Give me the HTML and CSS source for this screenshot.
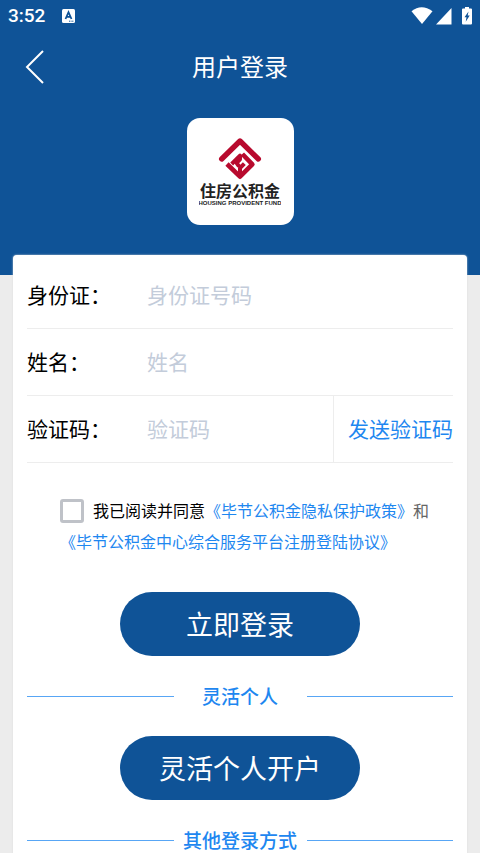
FILE: index.html
```html
<!DOCTYPE html>
<html lang="zh-CN">
<head>
<meta charset="utf-8">
<meta name="viewport" content="width=device-width, initial-scale=1">
<title>用户登录</title>
<link rel="stylesheet" href="styles.css">
</head>
<body>
<header class="hero">
  <div class="status">
    <span class="clock">3:52</span>
    <svg class="app-badge" viewBox="0 0 13 14" aria-hidden="true"><rect width="13" height="14" rx="1.5" fill="#fff"/><path d="M3.5 10 6.5 3.2 9.5 10M4.6 7.9h3.8" fill="none" stroke="#0f5397" stroke-width="1.8"/><path d="M7 12.2h5" stroke="#0f5397" stroke-width="1" stroke-dasharray="1 .6"/></svg>
    <svg class="signals" viewBox="0 0 62 20" aria-hidden="true"><g fill="#fff"><path d="M.5 5.2Q10.500-2.500 21.500 5.200L11 18Z"/><path d="M40.500 2v16.500h-15.500Z"/><path d="M54 1h4v1.500h2q1 0 1 1v14q0 1-1 1h-8q-1 0-1-1v-14q0-1 1-1h2Z"/></g><path d="M57.500 5.500 53.500 11.200h2l-.8 4.500 4-6.200h-2Z" fill="#0f5397"/></svg>
  </div>
  <nav class="bar">
    <button class="back" type="button" aria-label="返回"><svg viewBox="0 0 20 34" aria-hidden="true"><path d="M18 1 2 17l16 16" fill="none" stroke="#fff" stroke-width="2"/></svg></button>
    <h1 class="title">用户登录</h1>
  </nav>
  <div class="logo">
    <svg class="mark" viewBox="0 0 150 144" aria-hidden="true"><g fill="none" stroke="#b80a2e" stroke-linejoin="round"><path d="M20 75 75 21 130 75" stroke-width="16" stroke-linecap="round"/><path d="M36 90 75 128 112 91 82 60" stroke-width="14"/><path d="M50 90 75 65V76L65 87 72 97M75 120V102L88 89" stroke-width="12"/></g></svg>
    <span class="logo-name">住房公积金</span>
    <svg class="logo-sub" viewBox="0 0 82 7" role="img" aria-label="HOUSING PROVIDENT FUND"><text x="41" y="6" text-anchor="middle">HOUSING PROVIDENT FUND</text></svg>
  </div>
</header>
<main class="card">
  <form class="form">
    <div class="row"><label for="idno">身份证：</label><input id="idno" type="text" placeholder="身份证号码"></div>
    <div class="row"><label for="name">姓名：</label><input id="name" type="text" placeholder="姓名"></div>
    <div class="row"><label for="code">验证码：</label><input id="code" type="text" placeholder="验证码"><button class="send" type="button">发送验证码</button></div>
    <div class="agree">
      <input id="agree" type="checkbox"><label for="agree">我已阅读并同意</label><a href="#privacy">《毕节公积金隐私保护政策》</a><span>和</span>
      <a class="terms" href="#terms">《毕节公积金中心综合服务平台注册登陆协议》</a>
    </div>
    <button class="pill" type="submit">立即登录</button>
    <h2 class="divider">灵活个人</h2>
    <button class="pill" type="button">灵活个人开户</button>
    <h2 class="divider">其他登录方式</h2>
  </form>
</main>
</body>
</html>
```
FILE: styles.css
```css
* { box-sizing: border-box; }
body {
  margin: 0;
  background: #ececec;
  color: #000;
  font-family: "Noto Sans CJK SC", sans-serif;
}
button, input { font: inherit; border: 0; background: none; padding: 0; }
a { color: #1e87f0; text-decoration: none; }

.hero { height: 275px; background: #0f5397; color: #fff; }
.status { display: flex; align-items: center; height: 32px; padding: 0 7px 0 8px; }
.clock { font: 500 19px/32px Roboto, sans-serif; }
.app-badge { width: 13px; height: 14px; margin-left: 17px; }
.signals { width: 62px; height: 20px; margin-left: auto; }
.bar { display: grid; grid-template-columns: 72px 1fr 72px; align-items: center; height: 70px; }
.back { display: flex; justify-content: flex-end; padding-right: 27px; }
.back svg { width: 20px; height: 34px; }
.title { margin: 0; padding-bottom: 2px; text-align: center; font-size: 24px; line-height: 32px; font-weight: 400; }
.logo {
  display: flex;
  flex-direction: column;
  align-items: center;
  width: 107px;
  height: 107px;
  margin: 16px auto 0;
  padding-top: 16px;
  border-radius: 13px;
  background: #fff;
  color: #222;
}
.mark { width: 50px; height: 48px; }
.logo-name { font-size: 16px; line-height: 16px; font-weight: 700; }
.logo-sub { width: 82px; height: 7px; margin-top: 1px; }
.logo-sub text { font: 700 6px "Liberation Sans", sans-serif; fill: #222; }

.card {
  position: relative;
  margin: -20px 13px 0;
  padding: 7px 14px 0;
  border-radius: 4px 4px 0 0;
  background: #fff;
  box-shadow: 0 0 2px #d8d8d8;
}
.row { display: flex; height: 67px; border-bottom: 1px solid #ededed; font-size: 21px; }
.row label { width: 120px; line-height: 64px; }
.row input { flex: 1; min-width: 0; padding-bottom: 2px; outline: 0; }
.row input::placeholder { color: #c3ccda; opacity: 1; }
.send { padding: 0 0 2px 14px; border-left: 1px solid #ededed; color: #1e87f0; }
.agree {
  display: flex;
  flex-wrap: wrap;
  align-items: center;
  padding: 32px 0 35px 33px;
  font-size: 16px;
  line-height: 31px;
}
.agree input {
  appearance: none;
  width: 24px;
  height: 24px;
  margin: 0 9px 0 0;
  border: 3px solid #bfc2c8;
  border-radius: 3px;
}
.agree span { color: #666; }
.pill {
  display: block;
  width: 240px;
  height: 64px;
  margin: 0 auto;
  padding-bottom: 2px;
  border-radius: 32px;
  background: #0f5397;
  color: #fff;
  font-size: 27px;
}
.divider {
  display: grid;
  grid-template-columns: 1fr 133px 1fr;
  align-items: center;
  margin: 0;
  height: 80px;
  color: #1e87f0;
  font-size: 19px;
  line-height: 20px;
  font-weight: 500;
  text-align: center;
}
.divider::before, .divider::after { content: ""; height: 1px; background: #58a6f5; }
```
